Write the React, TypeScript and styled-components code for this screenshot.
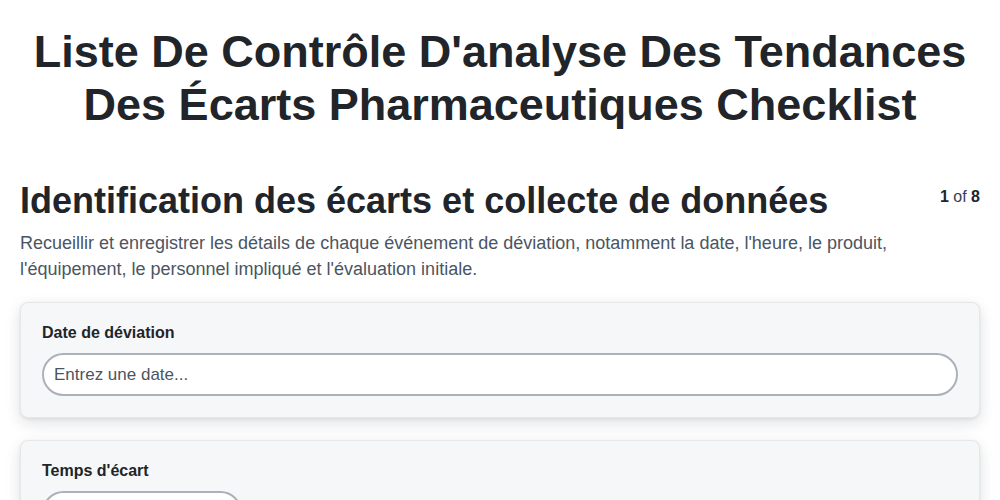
import styled, { createGlobalStyle } from "styled-components";

const GlobalStyle = createGlobalStyle`
  body {
    margin: 0;
    background: #ffffff;
    font-family: "Liberation Sans", Arial, sans-serif;
    color: #212529;
  }
`;

const Page = styled.div`
  padding: 20px 20px 40px;
  box-sizing: border-box;
  width: 1000px;
`;

const Title = styled.h1`
  margin: 5px 0 48px;
  font-size: 45px;
  line-height: 53px;
  font-weight: bold;
  text-align: center;
  color: #212529;
`;

const SectionHeader = styled.div`
  display: flex;
  align-items: flex-start;
  justify-content: space-between;
`;

const SectionTitle = styled.h2`
  margin: 0;
  font-size: 36px;
  line-height: 43px;
  font-weight: bold;
  color: #212529;
`;

const Pager = styled.span`
  font-size: 16px;
  color: #374151;
  margin-top: 9px;

  b {
    color: #212529;
  }
`;

const Description = styled.p`
  margin: 8px 0 20px;
  font-size: 18px;
  line-height: 26px;
  color: #4b5563;
`;

const Card = styled.div`
  background: #f6f7f9;
  border: 1px solid #e5e7eb;
  border-radius: 8px;
  box-shadow: 0 5px 15px rgba(15, 23, 42, 0.13), 0 1px 3px rgba(15, 23, 42, 0.08);
  padding: 20px 21px 21px;
  margin-bottom: 22px;
`;

const Label = styled.label`
  display: block;
  font-size: 16px;
  line-height: 20px;
  font-weight: bold;
  color: #212529;
  margin-bottom: 10px;
`;

const Input = styled.input<{ $width?: string }>`
  display: block;
  box-sizing: border-box;
  width: ${(p) => p.$width || "100%"};
  height: 43px;
  padding: 0 10px;
  border: 2px solid #aab1ba;
  border-radius: 22px;
  background: #ffffff;
  font-family: "Liberation Sans", Arial, sans-serif;
  font-size: 17px;
  color: #212529;
  outline: none;

  &::placeholder {
    color: #4b5563;
  }
`;

export default function App() {
  return (
    <Page>
      <GlobalStyle />
      <Title>
        Liste De Contrôle D'analyse Des Tendances Des Écarts Pharmaceutiques Checklist
      </Title>

      <SectionHeader>
        <SectionTitle>Identification des écarts et collecte de données</SectionTitle>
        <Pager>
          <b>1</b> of <b>8</b>
        </Pager>
      </SectionHeader>
      <Description>
        Recueillir et enregistrer les détails de chaque événement de déviation, notamment la date,
        l'heure, le produit, l'équipement, le personnel impliqué et l'évaluation initiale.
      </Description>

      <Card>
        <Label>Date de déviation</Label>
        <Input placeholder="Entrez une date..." />
      </Card>

      <Card>
        <Label>Temps d'écart</Label>
        <Input $width="200px" />
      </Card>
    </Page>
  );
}
